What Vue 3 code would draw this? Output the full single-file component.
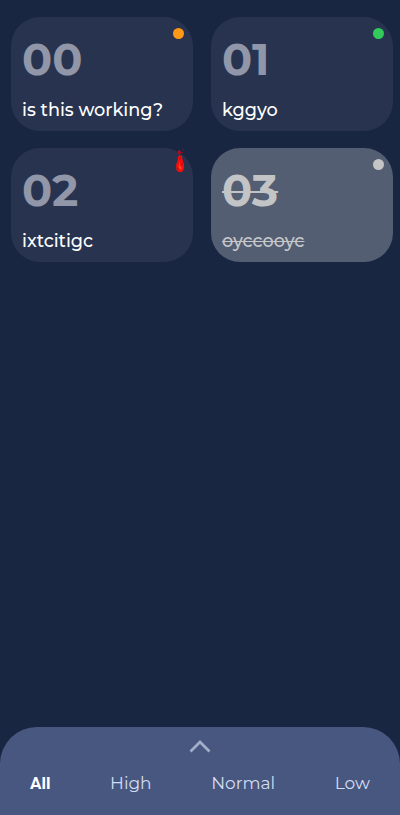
<script setup>
const tasks = [
  { number: '00', title: 'is this working?', level: 'normal' },
  { number: '01', title: 'kggyo', level: 'low' },
  { number: '02', title: 'ixtcitigc', level: 'high' },
  { number: '03', title: 'oyccooyc', level: 'done' },
]
const filters = ['All', 'High', 'Normal', 'Low']
</script>

<template>
  <div class="screen">
    <main class="grid">
      <article v-for="t in tasks" :key="t.number" class="card" :class="t.level">
        <svg v-if="t.level === 'high'" class="flame" viewBox="0 0 12 28" aria-hidden="true">
          <path d="M4 11 L5.500 9 L8 10 L8.500 14 L10 18 V22 L9 25 L7.500 26 H4.500 L2.500 24 L2 19 L3.500 15Z" fill="#f40d0c" />
          <path d="M4 5 L5.500 4 L7 6 L6.500 8 H4Z" fill="#b50b20" />
          <path d="M8.500 3h1v1.500h-1z M8 6h1v1H8z" fill="#8e1028" />
          <path d="M5 18 L6 16 L6 20 L8 22 L6.500 24 L4.500 21Z" fill="#ff4a16" />
          <path d="M6 11v3M8 17v2M4 22v1" stroke="#a90b22" stroke-width="0.8" />
        </svg>
        <i v-else class="dot"></i>
        <h2><span>{{ t.number }}</span></h2>
        <p><span>{{ t.title }}</span></p>
      </article>
    </main>
    <footer class="sheet">
      <svg class="chevron" viewBox="0 0 22 14" aria-hidden="true">
        <path d="M1.500 12.500 L11 3 L20.500 12.500" fill="none" stroke="#a2aec9" stroke-width="2.800" />
      </svg>
      <nav>
        <a v-for="f in filters" :key="f" :class="{ active: f === 'All' }">{{ f }}</a>
      </nav>
    </footer>
  </div>
</template>

<style>
body { background: #182642; }
</style>

<style scoped>
.screen {
  height: 815px;
  box-sizing: border-box;
  display: flex;
  flex-direction: column;
  justify-content: space-between;
  background: #182642;
  font-family: Montserrat, Inter, sans-serif;
  overflow: hidden;
}
.grid {
  display: grid;
  grid-template-columns: 182px 182px;
  gap: 17px 18px;
  padding: 17px 7px 0 11px;
}
.card {
  position: relative;
  height: 114px;
  box-sizing: border-box;
  border-radius: 29px;
  background: #28344f;
  padding: 16px 11px 0;
  color: #fff;
}
.card.done { background: #545e73; color: #c6c7c9; }
.dot {
  position: absolute;
  top: 11px;
  right: 9px;
  width: 11px;
  height: 11px;
  border-radius: 50%;
}
.normal .dot { background: #ff9817; }
.low .dot { background: #32ca5b; }
.done .dot { background: #c5c5c5; }
.flame {
  position: absolute;
  top: -2px;
  right: 7px;
  width: 12px;
  height: 28px;
}
h2, p { margin: 0; white-space: nowrap; }
h2 {
  height: 52px;
  line-height: 52px;
  font-size: 44.500px;
  font-weight: 700;
  color: #9197a8;
}
.done h2 { color: #c3c4c5; }
p {
  height: 24px;
  margin-top: 13px;
  line-height: 24px;
  font-size: 17.700px;
  font-weight: 500;
}
.done h2 span, .done p span { text-decoration: line-through; }
.done h2 span { text-decoration-thickness: 2px; }
.done p span { text-decoration-thickness: 1px; }
.sheet {
  height: 88px;
  border-radius: 37px 37px 0 0;
  background: #485780;
  display: flex;
  flex-direction: column;
  align-items: center;
}
.chevron { width: 22px; height: 14px; margin-top: 12px; }
nav {
  width: 340px;
  margin-top: 18px;
  display: flex;
  justify-content: space-between;
}
a { font-size: 17px; line-height: 24px; color: #d2dcf2; font-weight: 400; }
a.active { color: #fff; font-family: Roboto, sans-serif; font-weight: 700; font-size: 17px; }
</style>
